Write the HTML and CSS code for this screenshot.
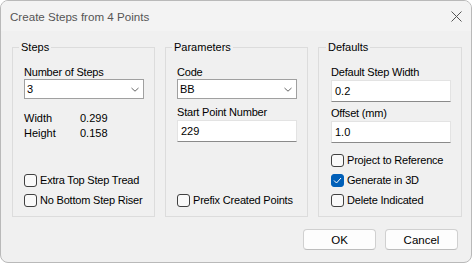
FILE: index.html
```html
<!DOCTYPE html>
<html lang="en">
<head>
    <meta charset="UTF-8">
    <title>Create Steps from 4 Points</title>
    <link rel="stylesheet" href="styles.css">
</head>
<body>
    <div class="window">
        <div class="titlebar">
            <span class="title">Create Steps from 4 Points</span>
            <span class="close">
                <svg width="11" height="11" viewBox="0 0 11 11"><path d="M0.5 0.5L10.5 10.5M10.5 0.5L0.5 10.5" stroke="#555" stroke-width="1" fill="none"/></svg>
            </span>
        </div>
        <div class="content">
            <div class="groups">
                <div class="group steps">
                    <div class="group-title">Steps</div>
                    <label class="field-label">Number of Steps</label>
                    <div class="combo"><span>3</span><svg class="chev" width="8" height="5" viewBox="0 0 8 5"><path d="M0.5 1L4 4.2L7.5 1" stroke="#666" fill="none"/></svg></div>
                    <div class="values">
                        <span>Width</span><span>0.299</span>
                        <span>Height</span><span>0.158</span>
                    </div>
                    <div class="checks">
                        <div class="check"><span class="box"></span>Extra Top Step Tread</div>
                        <div class="check"><span class="box"></span>No Bottom Step Riser</div>
                    </div>
                </div>
                <div class="group params">
                    <div class="group-title">Parameters</div>
                    <label class="field-label">Code</label>
                    <div class="combo"><span>BB</span><svg class="chev" width="8" height="5" viewBox="0 0 8 5"><path d="M0.5 1L4 4.2L7.5 1" stroke="#666" fill="none"/></svg></div>
                    <label class="field-label second">Start Point Number</label>
                    <div class="textbox">229</div>
                    <div class="checks">
                        <div class="check"><span class="box"></span>Prefix Created Points</div>
                    </div>
                </div>
                <div class="group defaults">
                    <div class="group-title">Defaults</div>
                    <label class="field-label">Default Step Width</label>
                    <div class="textbox">0.2</div>
                    <label class="field-label second">Offset (mm)</label>
                    <div class="textbox">1.0</div>
                    <div class="checks">
                        <div class="check"><span class="box"></span>Project to Reference</div>
                        <div class="check"><span class="box checked"><svg width="9" height="7" viewBox="0 0 9 7"><path d="M1 3.5L3.5 6L8 1" stroke="#fff" stroke-width="1" fill="none"/></svg></span>Generate in 3D</div>
                        <div class="check"><span class="box"></span>Delete Indicated</div>
                    </div>
                </div>
            </div>
            <div class="buttons">
                <button class="btn">OK</button>
                <button class="btn">Cancel</button>
            </div>
        </div>
    </div>
</body>
</html>
```

FILE: styles.css
```css
body {
    margin: 0;
    background: #fff;
    font-family: "Liberation Sans", Arial, sans-serif;
    font-size: 11px;
    color: #000;
}

.window {
    width: 472px;
    height: 263px;
    box-sizing: border-box;
    border: 1px solid #b9b9b9;
    border-radius: 8px;
    background: #f0f0f0;
    overflow: hidden;
}

.titlebar {
    height: 30px;
    background: #f3f3f3;
    display: flex;
    align-items: center;
    justify-content: space-between;
    padding: 0 8px 0 9px;
}

.title {
    font-size: 11.6px;
    color: #555;
}

.close {
    display: flex;
    margin-right: 1px;
}

.content {
    padding: 16px 9px 0 11px;
}

.groups {
    display: flex;
    gap: 10px;
}

.group {
    width: 143px;
    height: 170px;
    box-sizing: border-box;
    border: 1px solid #dcdcdc;
    display: flex;
    flex-direction: column;
    padding: 0 10px 6px 11px;
}

.group.defaults {
    width: 144px;
    padding-left: 12px;
}

.group-title {
    margin: -7px 0 0 -5px;
    padding: 0 2px;
    line-height: 13px;
    background: #f0f0f0;
    align-self: flex-start;
}

.field-label {
    display: block;
    line-height: 13px;
    margin-top: 12px;
    letter-spacing: -0.2px;
}

.field-label.second {
    margin-top: 7px;
}

.defaults .field-label.second {
    margin-top: 5px;
}

.combo {
    height: 20px;
    box-sizing: border-box;
    border: 1px solid #a0a0a0;
    background: #fff;
    display: flex;
    align-items: center;
    justify-content: space-between;
    padding: 0 4px 0 2px;
}

.textbox {
    height: 22px;
    box-sizing: border-box;
    border: 1px solid #e3e3e3;
    border-bottom-color: #8a8a8a;
    background: #fff;
    display: flex;
    align-items: center;
    padding: 0 3px;
    margin-top: 1px;
}

.defaults .textbox:first-of-type {
    margin-top: 0;
}

.values {
    display: grid;
    grid-template-columns: 56px auto;
    line-height: 15px;
    margin-top: 12px;
}

.checks {
    margin-top: auto;
}

.check {
    height: 20px;
    display: flex;
    align-items: center;
    gap: 3px;
    letter-spacing: -0.2px;
}

.box {
    width: 13px;
    height: 13px;
    box-sizing: border-box;
    border: 1px solid #404040;
    border-radius: 3px;
    background: #f9f9f9;
    display: flex;
    align-items: center;
    justify-content: center;
}

.box.checked {
    background: #005fb8;
    border-color: #005fb8;
}

.buttons {
    display: flex;
    justify-content: flex-end;
    gap: 9px;
    margin-top: 12px;
    padding-right: 4px;
}

.btn {
    width: 73px;
    height: 21px;
    box-sizing: border-box;
    border: 1px solid #d0d0d0;
    border-bottom-color: #bdbdbd;
    border-radius: 4px;
    background: #fdfdfd;
    font-family: "Liberation Sans", Arial, sans-serif;
    font-size: 11.5px;
    color: #000;
    padding: 0;
}
```
